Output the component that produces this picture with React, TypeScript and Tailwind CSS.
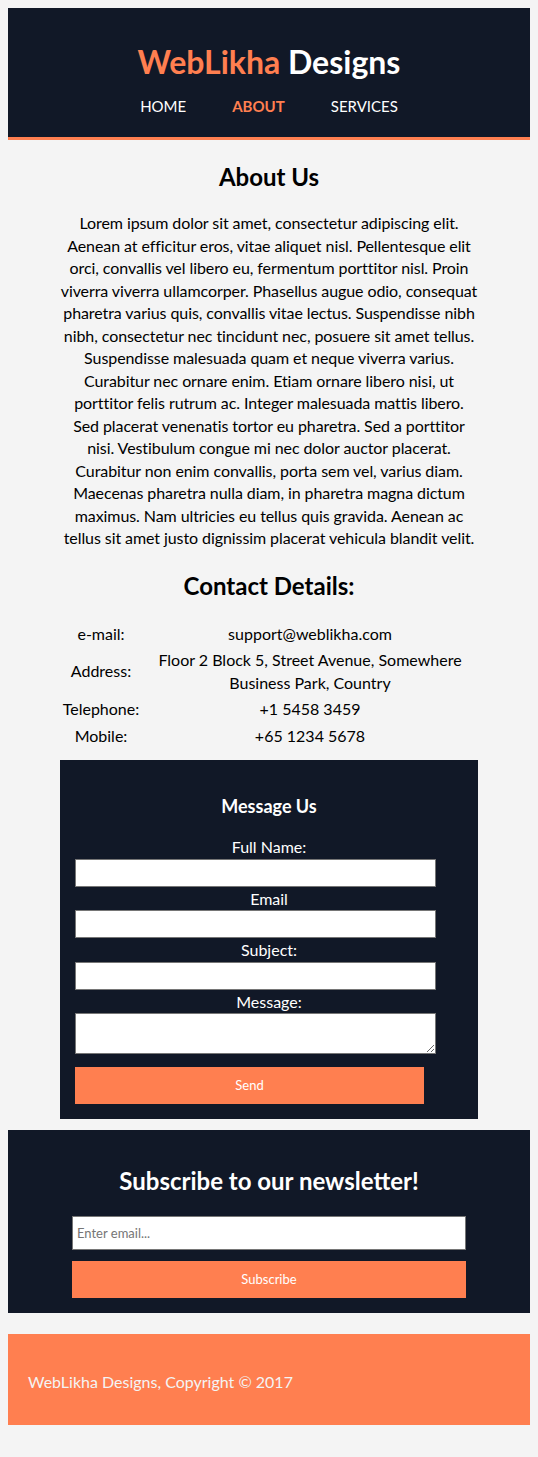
const paragraph =
  "Lorem ipsum dolor sit amet, consectetur adipiscing elit. Aenean at efficitur eros, vitae aliquet nisl. Pellentesque elit orci, convallis vel libero eu, fermentum porttitor nisl. Proin viverra viverra ullamcorper. Phasellus augue odio, consequat pharetra varius quis, convallis vitae lectus. Suspendisse nibh nibh, consectetur nec tincidunt nec, posuere sit amet tellus. Suspendisse malesuada quam et neque viverra varius. Curabitur nec ornare enim. Etiam ornare libero nisi, ut porttitor felis rutrum ac. Integer malesuada mattis libero. Sed placerat venenatis tortor eu pharetra. Sed a porttitor nisi. Vestibulum congue mi nec dolor auctor placerat. Curabitur non enim convallis, porta sem vel, varius diam. Maecenas pharetra nulla diam, in pharetra magna dictum maximus. Nam ultricies eu tellus quis gravida. Aenean ac tellus sit amet justo dignissim placerat vehicula blandit velit.";

const contacts = [
  { label: "e-mail:", value: "support@weblikha.com" },
  { label: "Address:", value: "Floor 2 Block 5, Street Avenue, Somewhere Business Park, Country" },
  { label: "Telephone:", value: "+1 5458 3459" },
  { label: "Mobile:", value: "+65 1234 5678" },
];

const fields = ["Full Name:", "Email", "Subject:"];

export default function App() {
  return (
    <div className="min-h-[1457px] bg-[#f4f4f4] p-2 font-['Lato',sans-serif] text-[16px] text-black">
      {/* Header */}
      <header className="bg-[#111827] border-b-[3px] border-[#ff7f50] pt-[34px] pb-[19px] text-center">
        <h1 className="text-[32px] leading-[40px] font-bold text-white">
          <span className="text-[#ff7f50]">WebLikha</span> Designs
        </h1>
        <nav className="mt-[12px] flex justify-center text-[15px] leading-[24px] uppercase">
          <a className="px-[23px] text-white">Home</a>
          <a className="px-[23px] font-bold text-[#ff7f50]">About</a>
          <a className="px-[23px] text-white">Services</a>
        </nav>
      </header>

      {/* About */}
      <section className="mx-auto w-[418px] text-center">
        <h2 className="mt-[21px] text-[24px] leading-[32px] font-bold">About Us</h2>
        <p className="mt-[19px] leading-[22.5px] tracking-[-0.08px]">{paragraph}</p>

        <h2 className="mt-[20px] text-[24px] leading-[32px] font-bold">Contact Details:</h2>
        <table className="mt-[19px] w-full">
          <tbody>
            {contacts.map((c) => (
              <tr key={c.label}>
                <td className="w-[82px] py-[2px] leading-[22.5px]">{c.label}</td>
                <td className="px-[16px] py-[2px] leading-[22.5px]">{c.value}</td>
              </tr>
            ))}
          </tbody>
        </table>

        {/* Message form */}
        <div className="mt-[11px] bg-[#111827] px-[15px] pt-[34px] pb-[15px] text-white">
          <h3 className="text-[18px] leading-[25px] font-bold">Message Us</h3>
          <form className="mt-[17px] flex flex-col items-start">
            {fields.map((f, i) => (
              <div key={f} className="w-full">
                <label className={`block w-full leading-[22.5px] ${i > 0 ? "mt-[1px]" : ""}`}>{f}</label>
                <input
                  type="text"
                  className="block w-[361px] h-[28px] bg-white border border-[#767676] text-black"
                />
              </div>
            ))}
            <label className="mt-[1px] block w-full leading-[22.5px]">Message:</label>
            <textarea className="block w-[361px] h-[41px] bg-white border border-[#767676] text-black" />
            <button
              type="button"
              className="mt-[13px] w-[349px] h-[37px] bg-[#ff7f50] text-[13px] text-white"
            >
              Send
            </button>
          </form>
        </div>
      </section>

      {/* Newsletter */}
      <section className="mt-[11px] bg-[#111827] pt-[35px] pb-[15px] text-center text-white">
        <h2 className="text-[24px] leading-[32px] font-bold">Subscribe to our newsletter!</h2>
        <input
          type="email"
          placeholder="Enter email..."
          className="mx-auto mt-[19px] block w-[394px] h-[34px] bg-white border border-[#767676] px-[4px] text-[13px] text-black placeholder:text-[#757575]"
        />
        <button
          type="button"
          className="mx-auto mt-[11px] block w-[394px] h-[37px] bg-[#ff7f50] text-[13px] text-white"
        >
          Subscribe
        </button>
      </section>

      {/* Footer */}
      <footer className="mt-[21px] h-[91px] bg-[#ff7f50] px-[20px] pt-[5px] flex items-center text-[#f4f4f4]">
        WebLikha Designs, Copyright © 2017
      </footer>
    </div>
  );
}
